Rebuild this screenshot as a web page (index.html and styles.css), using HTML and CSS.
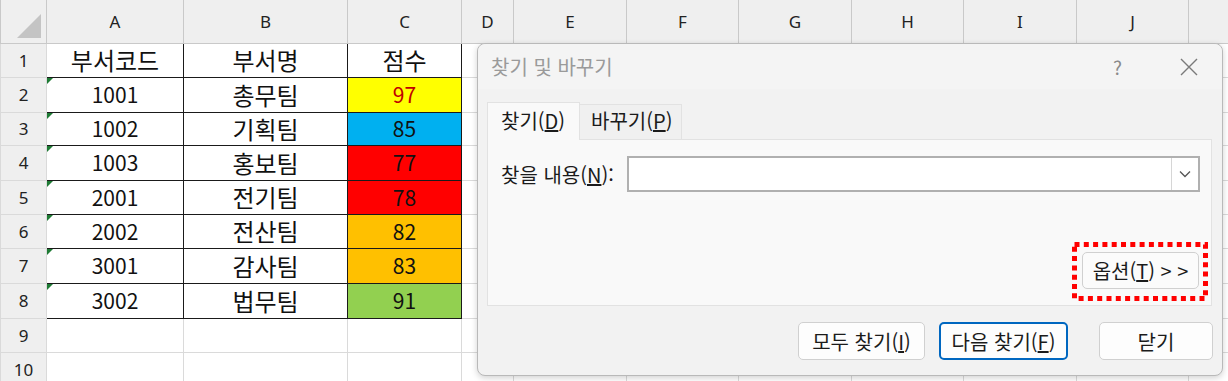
FILE: index.html
```html
<!DOCTYPE html>
<html lang="ko">
<head>
  <meta charset="UTF-8" />
  <title>찾기 및 바꾸기</title>
  <link rel="stylesheet" href="styles.css">
</head>
<body>
  <table class="sheet">
    <colgroup>
      <col style="width:46px"><col style="width:137px"><col style="width:164px"><col style="width:114px">
      <col style="width:52px"><col style="width:113px"><col style="width:112px"><col style="width:113px">
      <col style="width:112px"><col style="width:113px"><col style="width:112px"><col style="width:40px">
    </colgroup>
    <tr class="colhdr" style="height:43px">
      <th class="corner"><span class="tri"></span></th>
      <th>A</th><th>B</th><th>C</th><th>D</th><th>E</th><th>F</th><th>G</th><th>H</th><th>I</th><th>J</th><th></th>
    </tr>
    <tr style="height:34px">
      <th class="rowhdr">1</th>
      <td class="d k">부서코드</td><td class="d k">부서명</td><td class="d k">점수</td>
      <td></td><td></td><td></td><td></td><td></td><td></td><td></td><td></td>
    </tr>
    <tr style="height:35px">
      <th class="rowhdr">2</th>
      <td class="d num">1001</td><td class="d k">총무팀</td><td class="d yellow">97</td>
      <td></td><td></td><td></td><td></td><td></td><td></td><td></td><td></td>
    </tr>
    <tr style="height:33px">
      <th class="rowhdr">3</th>
      <td class="d num">1002</td><td class="d k">기획팀</td><td class="d blue">85</td>
      <td></td><td></td><td></td><td></td><td></td><td></td><td></td><td></td>
    </tr>
    <tr style="height:35px">
      <th class="rowhdr">4</th>
      <td class="d num">1003</td><td class="d k">홍보팀</td><td class="d red">77</td>
      <td></td><td></td><td></td><td></td><td></td><td></td><td></td><td></td>
    </tr>
    <tr style="height:34px">
      <th class="rowhdr">5</th>
      <td class="d num">2001</td><td class="d k">전기팀</td><td class="d red">78</td>
      <td></td><td></td><td></td><td></td><td></td><td></td><td></td><td></td>
    </tr>
    <tr style="height:34px">
      <th class="rowhdr">6</th>
      <td class="d num">2002</td><td class="d k">전산팀</td><td class="d orange">82</td>
      <td></td><td></td><td></td><td></td><td></td><td></td><td></td><td></td>
    </tr>
    <tr style="height:35px">
      <th class="rowhdr">7</th>
      <td class="d num">3001</td><td class="d k">감사팀</td><td class="d orange">83</td>
      <td></td><td></td><td></td><td></td><td></td><td></td><td></td><td></td>
    </tr>
    <tr style="height:35px">
      <th class="rowhdr">8</th>
      <td class="d num">3002</td><td class="d k">법무팀</td><td class="d green">91</td>
      <td></td><td></td><td></td><td></td><td></td><td></td><td></td><td></td>
    </tr>
    <tr style="height:34px">
      <th class="rowhdr">9</th>
      <td></td><td></td><td></td><td></td><td></td><td></td><td></td><td></td><td></td><td></td><td></td>
    </tr>
    <tr style="height:35px">
      <th class="rowhdr">10</th>
      <td></td><td></td><td></td><td></td><td></td><td></td><td></td><td></td><td></td><td></td><td></td>
    </tr>
  </table>

  <div class="dialog">
    <div class="titlebar">
      <span class="title">찾기 및 바꾸기</span>
      <span class="help">?</span>
      <svg class="close" width="18" height="18" viewBox="0 0 18 18">
        <path d="M1 1 L17 17 M17 1 L1 17" stroke="#7a7a7a" stroke-width="1.4" fill="none"/>
      </svg>
    </div>

    <div class="tabs">
      <div class="tab active">찾기(<u>D</u>)</div>
      <div class="tab">바꾸기(<u>P</u>)</div>
    </div>

    <div class="panel">
      <div class="find-row">
        <label>찾을 내용(<u>N</u>):</label>
        <div class="combo">
          <div class="combo-text"></div>
          <div class="combo-btn">
            <svg width="12" height="8" viewBox="0 0 12 8">
              <path d="M1 1.5 L6 6.5 L11 1.5" stroke="#555" stroke-width="1.3" fill="none"/>
            </svg>
          </div>
        </div>
      </div>
      <div class="opt-wrap">
        <svg class="dots" width="136" height="59">
          <rect x="2.5" y="2.5" width="131" height="54" fill="none" stroke="#ff0000" stroke-width="5" stroke-dasharray="5 4.3"/>
        </svg>
        <button class="btn opt">옵션(<u>T</u>) &gt; &gt;</button>
      </div>
    </div>

    <div class="actions">
      <button class="btn all">모두 찾기(<u>I</u>)</button>
      <button class="btn next">다음 찾기(<u>F</u>)</button>
      <button class="btn close-btn">닫기</button>
    </div>
  </div>
</body>
</html>
```

FILE: styles.css
```css
body {
  margin: 0;
  width: 1228px;
  height: 381px;
  overflow: hidden;
  position: relative;
  background: #ffffff;
  font-family: "Noto Sans CJK KR", "Noto Sans", sans-serif;
}

/* spreadsheet */

.sheet {
  border-collapse: collapse;
  table-layout: fixed;
  width: 1228px;
}

.sheet th,
.sheet td {
  padding: 0;
  border: 1px solid #dadada;
  text-align: center;
  overflow: hidden;
  white-space: nowrap;
}

.colhdr th {
  background: #efefef;
  font-family: "Noto Sans", sans-serif;
  font-weight: normal;
  font-size: 17px;
  color: #222;
  border-color: #c9c9c9;
  border-top: none;
}

.corner {
  position: relative;
}

.tri {
  position: absolute;
  right: 5px;
  bottom: 5px;
  width: 0;
  height: 0;
  border-left: 24px solid transparent;
  border-bottom: 24px solid #c4c4c4;
}

.rowhdr {
  background: #efefef;
  font-family: "Noto Sans", sans-serif;
  font-weight: normal;
  font-size: 17px;
  color: #222;
  border-color: #d4d4d4;
  border-left: none;
  border-right-color: #c9c9c9;
}

.sheet td.d {
  border: 1px solid #1a1a1a;
  font-size: 21px;
  color: #111;
  line-height: 1;
}

.sheet td.k {
  font-size: 24px;
}

.num {
  position: relative;
}

.num::before {
  content: "";
  position: absolute;
  left: 0;
  top: 0;
  border-top: 6px solid #1e7b34;
  border-right: 6px solid transparent;
}

.yellow { background: #ffff00; color: #c00000 !important; }
.blue { background: #00b0f0; }
.red { background: #ff0000; }
.orange { background: #ffc000; }
.green { background: #92d050; }

/* dialog */

.dialog {
  position: absolute;
  left: 477px;
  top: 43px;
  width: 746px;
  height: 333px;
  box-sizing: border-box;
  background: #f2f2f2;
  border: 1px solid #b9b9b9;
  border-radius: 8px;
  box-shadow: 0 2px 6px rgba(0, 0, 0, 0.18);
  font-size: 20px;
  color: #1b1b1b;
  display: flex;
  flex-direction: column;
}

.titlebar {
  height: 45px;
  display: flex;
  align-items: center;
  padding: 0 24px 0 13px;
  background: #f4f4f4;
  border-radius: 8px 8px 0 0;
}

.title {
  color: #9a9a9a;
  flex: 1;
  font-size: 20px;
}

.help {
  color: #8a8a8a;
  font-size: 19px;
  margin-right: 58px;
}

.close {
  display: block;
}

.tabs {
  display: flex;
  align-items: flex-end;
  margin: 12px 0 0 9px;
  height: 38px;
}

.tab {
  box-sizing: border-box;
  height: 35px;
  padding: 2px 0 0 11px;
  background: #f0f0f0;
  border: 1px solid #e2e2e2;
  border-bottom: none;
  line-height: 1.4;
}

.tab.active {
  height: 38px;
  width: 93px;
  padding: 4px 0 0 13px;
  background: #f9f9f9;
  position: relative;
  top: 1px;
}

.tab + .tab {
  width: 102px;
  border-left: none;
}

.panel {
  margin: 0 10px 0 9px;
  height: 167px;
  box-sizing: border-box;
  background: #f9f9f9;
  border: 1px solid #e2e2e2;
  display: flex;
  flex-direction: column;
  padding: 16px 11px 4px 13px;
}

.find-row {
  display: flex;
  align-items: center;
}

.find-row label {
  width: 126px;
}

.combo {
  flex: 1;
  height: 36px;
  box-sizing: border-box;
  display: flex;
  background: #fff;
  border: 2px solid #b0b0b0;
}

.combo-text {
  flex: 1;
}

.combo-btn {
  width: 26px;
  border-left: 1px solid #d6d6d6;
  display: flex;
  align-items: center;
  justify-content: center;
}

.opt-wrap {
  position: relative;
  align-self: flex-end;
  margin-top: auto;
  margin-right: -8px;
  width: 136px;
  height: 59px;
  box-sizing: border-box;
  padding: 10px 0 0 10px;
}

.dots {
  position: absolute;
  left: 0;
  top: 0;
}

.btn {
  font-family: "Noto Sans CJK KR", "Noto Sans", sans-serif;
  font-size: 20px;
  color: #1b1b1b;
  background: #fdfdfd;
  border: 1px solid #d0d0d0;
  border-radius: 5px;
  box-sizing: border-box;
  height: 38px;
  padding: 0;
}

.btn.opt {
  width: 117px;
  height: 37px;
  background: #fbfbfb;
}

.actions {
  display: flex;
  justify-content: flex-end;
  margin: 16px 9px 0 0;
}

.btn.all {
  width: 127px;
}

.btn.next {
  width: 129px;
  margin-left: 14px;
  border: 2px solid #0067c0;
}

.btn.close-btn {
  width: 114px;
  margin-left: 31px;
}
```
